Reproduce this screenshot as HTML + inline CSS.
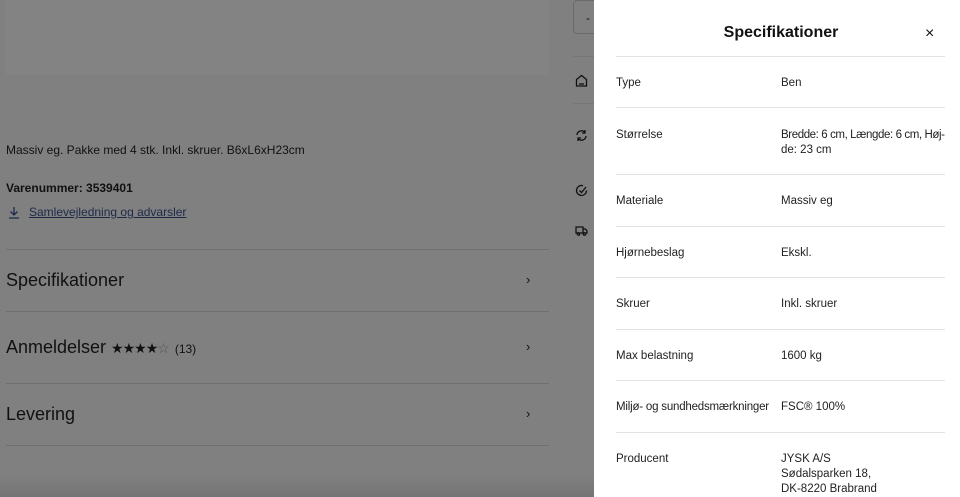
<!DOCTYPE html>
<html><head><meta charset="utf-8"><style>
*{margin:0;padding:0;box-sizing:border-box}
body{width:960px;height:497px;overflow:hidden;background:#808080;font-family:"Liberation Sans",sans-serif;position:relative;color:#111}
.a{position:absolute}
.img{left:6px;top:0;width:543px;height:75px;background:#838383}
.hr{height:1px;background:#6f6f6f}
.ic{position:absolute;left:575px;width:13px;height:13px}
.panel{left:594px;top:0;width:366px;height:497px;background:#fff}
.row{position:absolute;left:22px;width:329px;font-size:11.5px;color:#222;line-height:15px}
.row .v{position:absolute;left:165px;top:0;width:170px;white-space:nowrap}
.line{position:absolute;left:22px;width:329px;height:1px;background:#e2e2e2}
</style></head><body>
<div class="a img"></div>
<div class="a" style="left:573px;top:0;width:30px;height:34px;border:1px solid #6a6a6a;border-radius:4px;font-size:12px;padding:10px 0 0 12px">-</div>
<div class="a hr" style="left:573px;top:56px;width:21px;background:#777"></div>
<div class="a hr" style="left:573px;top:103px;width:21px;background:#777"></div>
<svg class="ic" style="top:74px" viewBox="0 0 13 13" fill="none" stroke="#111" stroke-width="1.3"><path d="M1.5 12V5.5L6.5 1.5l5 4V12z"/><path d="M4 10h5"/></svg>
<svg class="ic" style="top:129px" viewBox="0 0 13 13" fill="none" stroke="#111" stroke-width="1.3"><path d="M2 6a4.5 4.5 0 0 1 8-2.5M11 7a4.5 4.5 0 0 1-8 2.5"/><path d="M10 1v3H7M3 12V9h3"/></svg>
<svg class="ic" style="top:184px" viewBox="0 0 13 13" fill="none" stroke="#111" stroke-width="1.3"><path d="M11.5 6.5A5 5 0 1 1 8 1.7"/><path d="M4.5 6.5l2 2L11 3"/></svg>
<svg class="ic" style="top:224px" viewBox="0 0 13 13" fill="none" stroke="#111" stroke-width="1.3"><path d="M1 3h7v6H1zM8 5h2.5l1.5 2v2H8"/><circle cx="3.5" cy="10" r="1.2"/><circle cx="9.5" cy="10" r="1.2"/></svg>
<div class="a" style="left:6px;top:143px;font-size:12px">Massiv eg. Pakke med 4 stk. Inkl. skruer. B6xL6xH23cm</div>
<div class="a" style="left:6px;top:181px;font-size:12px;font-weight:bold">Varenummer: 3539401</div>
<svg class="a" style="left:8px;top:206px" width="12" height="13" viewBox="0 0 12 13" fill="none" stroke="#1d2a4a" stroke-width="1.3"><path d="M6 1v8M2.5 5.5L6 9l3.5-3.5M1 12h10"/></svg>
<div class="a" style="left:29px;top:205px;font-size:12px;color:#1d2a4a;text-decoration:underline">Samlevejledning og advarsler</div>
<div class="a hr" style="left:6px;top:249px;width:543px"></div>
<div class="a" style="left:6px;top:270px;font-size:18px">Specifikationer</div>
<div class="a" style="left:526px;top:272px;font-size:13px">›</div>
<div class="a hr" style="left:6px;top:311px;width:543px"></div>
<div class="a" style="left:6px;top:337px;font-size:18px">Anmeldelser <span style="font-size:14px;letter-spacing:-1px">★★★★</span><span style="font-size:14px;color:#555">☆</span> <span style="font-size:12px">(13)</span></div>
<div class="a" style="left:526px;top:339px;font-size:13px">›</div>
<div class="a hr" style="left:6px;top:383px;width:543px"></div>
<div class="a" style="left:6px;top:404px;font-size:18px">Levering</div>
<div class="a" style="left:526px;top:406px;font-size:13px">›</div>
<div class="a hr" style="left:6px;top:445px;width:543px"></div>
<div class="a" style="left:0;top:475px;width:594px;height:22px;background:linear-gradient(#808080,#747474)"></div>
<div class="a panel">
<div class="a" style="left:0;width:374px;top:24px;text-align:center;font-size:16px;font-weight:bold;color:#111">Specifikationer</div>
<div class="a" style="left:331px;top:25px;font-size:16px;color:#111">×</div>
<div class="line" style="top:56px"></div>
<div class="row" style="top:76px">Type<div class="v">Ben</div></div>
<div class="line" style="top:107px"></div>
<div class="row" style="top:128px">Størrelse<div class="v"><span style="letter-spacing:-0.4px">Bredde: 6 cm, Længde: 6 cm, Høj-</span><br>de: 23 cm</div></div>
<div class="line" style="top:174px"></div>
<div class="row" style="top:194px">Materiale<div class="v">Massiv eg</div></div>
<div class="line" style="top:226px"></div>
<div class="row" style="top:246px">Hjørnebeslag<div class="v">Ekskl.</div></div>
<div class="line" style="top:277px"></div>
<div class="row" style="top:297px">Skruer<div class="v">Inkl. skruer</div></div>
<div class="line" style="top:329px"></div>
<div class="row" style="top:349px">Max belastning<div class="v">1600 kg</div></div>
<div class="line" style="top:380px"></div>
<div class="row" style="top:400px"><span style="letter-spacing:-0.2px">Miljø- og sundhedsmærkninger</span><div class="v">FSC® 100%</div></div>
<div class="line" style="top:432px"></div>
<div class="row" style="top:452px">Producent<div class="v">JYSK A/S<br>Sødalsparken 18,<br>DK-8220 Brabrand</div></div>
</div>
</body></html>
